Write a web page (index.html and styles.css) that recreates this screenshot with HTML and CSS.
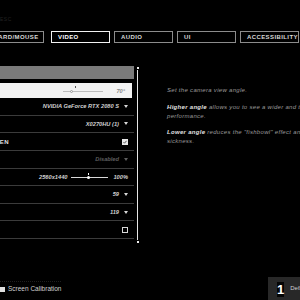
FILE: index.html
```html
<!DOCTYPE html>
<html lang="en">
<head>
    <meta charset="UTF-8">
    <meta name="viewport" content="width=device-width, initial-scale=1.0">
    <title>Settings - Video</title>
    <link rel="stylesheet" href="styles.css">
</head>
<body>

    <div class="screen">
        <!-- top hint -->
        <div class="top-hint">ESC</div>

        <!-- tabs -->
        <nav class="tabs">
            <div class="tab tab-keyboard">KEYBOARD/MOUSE</div>
            <div class="tab active">VIDEO</div>
            <div class="tab">AUDIO</div>
            <div class="tab">UI</div>
            <div class="tab">ACCESSIBILITY</div>
        </nav>

        <div class="content">
            <!-- settings list -->
            <div class="settings">
                <div class="list">
                    <div class="section-bar"></div>

                    <div class="row selected">
                        <div class="slider slider-dim">
                            <span class="track"></span>
                            <span class="marker" style="left: 12px"></span>
                            <span class="knob knob-hollow" style="left: 7px"></span>
                        </div>
                        <span class="value value-dim">70°</span>
                    </div>

                    <div class="row">
                        <span class="value">NVIDIA GeForce RTX 2080 S</span>
                        <span class="arrow"></span>
                    </div>

                    <div class="row">
                        <span class="value">X0270HU (1)</span>
                        <span class="arrow"></span>
                    </div>

                    <div class="row">
                        <div class="label"><span>FULLSCREEN</span></div>
                        <span class="checkbox checked">
                            <svg width="4" height="4" viewBox="0 0 4 4"><path d="M0.5 2.2 L1.5 3.2 L3.5 0.8" fill="none" stroke="#333" stroke-width="0.8"/></svg>
                        </span>
                    </div>

                    <div class="row">
                        <span class="value value-off">Disabled</span>
                        <span class="arrow arrow-off"></span>
                    </div>

                    <div class="row">
                        <span class="value res">2560x1440</span>
                        <div class="slider">
                            <span class="track"></span>
                            <span class="tick" style="left: 17px"></span>
                            <span class="knob" style="left: 16px"></span>
                        </div>
                        <span class="value">100%</span>
                    </div>

                    <div class="row">
                        <span class="value">59</span>
                        <span class="arrow"></span>
                    </div>

                    <div class="row">
                        <span class="value">119</span>
                        <span class="arrow"></span>
                    </div>

                    <div class="row">
                        <span class="checkbox"></span>
                    </div>
                </div>

                <div class="scrollbar">
                    <span class="dot"></span>
                    <span class="line"></span>
                    <span class="dot"></span>
                </div>
            </div>

            <!-- description -->
            <aside class="info">
                <p>Set the camera view angle.</p>
                <p><strong>Higher angle</strong> allows you to see a wider and taller view, but may reduce performance.</p>
                <p><strong>Lower angle</strong> reduces the "fishbowl" effect and can help with reducing motion sickness.</p>
            </aside>
        </div>

        <footer class="footer">
            <div class="calibration">
                <span class="calib-icon"></span>
                Screen Calibration
            </div>
            <div class="defaults">
                <span class="key">1</span>
                <span class="defaults-text">Defaults</span>
            </div>
        </footer>
    </div>

</body>
</html>
```
FILE: styles.css
```css
html, body {
    margin: 0;
    padding: 0;
    background-color: #000;
    overflow: hidden;
}

.screen {
    width: 300px;
    height: 300px;
    display: flex;
    flex-direction: column;
    overflow: hidden;
    font-family: "Liberation Sans", Arial, sans-serif;
    color: #d6d6d6;
}

.top-hint {
    margin-top: 15px;
    height: 8px;
    line-height: 8px;
    font-size: 5px;
    color: #222;
    letter-spacing: 0.5px;
}

/* tabs */
.tabs {
    display: flex;
    gap: 4px;
    margin-top: 8px;
    margin-left: -32px;
}

.tab {
    flex: 0 0 59px;
    box-sizing: border-box;
    height: 12px;
    line-height: 10px;
    padding-left: 6px;
    border: 1px solid #8c8c8c;
    font-size: 6px;
    font-weight: bold;
    letter-spacing: 0.4px;
    color: #d8d8d8;
    white-space: nowrap;
    overflow: hidden;
}

.tab-keyboard {
    flex-basis: 76px;
    margin-right: 3px;
}

.tab.active {
    border-color: #f2f2f2;
    color: #fff;
}

/* main area */
.content {
    display: flex;
    margin-top: 23px;
}

.settings {
    display: flex;
    gap: 2px;
    width: 140px;
    flex-shrink: 0;
}

.list {
    width: 134px;
}

.section-bar {
    height: 13px;
    margin-bottom: 4px;
    background-color: #7a7a7a;
}

.row {
    display: flex;
    align-items: center;
    justify-content: flex-end;
    gap: 3px;
    box-sizing: border-box;
    height: 17.625px;
    padding-right: 6px;
    border-bottom: 1px solid #3b3b3b;
    font-size: 5.7px;
    font-style: italic;
    font-weight: bold;
    white-space: nowrap;
}

.row.selected {
    height: 15px;
    margin-right: 2px;
    padding-right: 7px;
    border-bottom: none;
    background-color: #f3f3f3;
}

.label {
    display: flex;
    justify-content: flex-end;
    width: 9px;
    margin-right: auto;
    font-size: 6px;
    font-style: normal;
    font-weight: bold;
    letter-spacing: 0.4px;
    color: #e0e0e0;
}

.value {
    color: #d2d2d2;
}

.value-dim {
    color: #8a8a8a;
    margin-left: 8px;
}

.value-off {
    color: #5e5e5e;
}

.res {
    margin-right: 1px;
}

.arrow {
    width: 0;
    height: 0;
    margin-left: 2px;
    border-left: 2px solid transparent;
    border-right: 2px solid transparent;
    border-top: 3px solid #d8d8d8;
}

.arrow-off {
    border-top-color: #5e5e5e;
}

.checkbox {
    display: flex;
    align-items: center;
    justify-content: center;
    box-sizing: border-box;
    width: 6px;
    height: 6px;
    border: 1px solid #d8d8d8;
}

.checkbox.checked {
    background-color: #e8e8e8;
    border-color: #e8e8e8;
}

/* sliders */
.slider {
    position: relative;
    width: 37px;
    height: 10px;
    margin-right: 2px;
}

.slider-dim {
    width: 40px;
}

.track {
    position: absolute;
    left: 0;
    right: 0;
    top: 5px;
    height: 1px;
    background-color: #d8d8d8;
}

.slider-dim .track {
    background-color: #bdbdbd;
}

.knob {
    position: absolute;
    top: 4px;
    width: 3px;
    height: 3px;
    border-radius: 50%;
    background-color: #fff;
}

.knob-hollow {
    background-color: #f3f3f3;
    box-sizing: border-box;
    border: 1px solid #9a9a9a;
}

.tick {
    position: absolute;
    top: 1px;
    width: 1px;
    height: 2px;
    background-color: #fff;
}

.marker {
    position: absolute;
    top: 0;
    width: 1px;
    height: 2px;
    background-color: #555;
}

/* scrollbar */
.scrollbar {
    display: flex;
    flex-direction: column;
    align-items: center;
    width: 3px;
    margin-bottom: -5px;
}

.scrollbar .dot {
    width: 2px;
    height: 2px;
    margin: 1px 0;
    background-color: #eee;
}

.scrollbar .line {
    flex: 1;
    width: 1px;
    background-color: #e6e6e6;
}

/* description */
.info {
    margin-left: 27px;
    padding-top: 20px;
    width: 232px;
    flex-shrink: 0;
    font-size: 6px;
    font-style: italic;
    line-height: 9px;
    letter-spacing: 0.3px;
    color: #9a9a9a;
}

.info p {
    margin: 0 0 7.5px;
}

.info strong {
    color: #e0e0e0;
}

/* footer */
.footer {
    display: flex;
    justify-content: space-between;
    align-items: flex-end;
    margin-top: auto;
}

.calibration {
    display: flex;
    align-items: center;
    gap: 3px;
    margin-bottom: 7px;
    padding-top: 3px;
    border-top: 1px dotted #1e1e1e;
    font-size: 6.5px;
    line-height: 8px;
    color: #d0d0d0;
}

.calib-icon {
    width: 5px;
    height: 5px;
    background-color: #e0e0e0;
}

.defaults {
    display: flex;
    align-items: flex-start;
    gap: 6px;
    width: 40px;
    height: 23px;
    margin-right: -8px;
    padding: 5px 0 0 9px;
    box-sizing: border-box;
    background-color: #282828;
    flex-shrink: 0;
}

.key {
    width: 10px;
    height: 15px;
    line-height: 15px;
    text-align: center;
    background-color: #050505;
    color: #fff;
    font-size: 13px;
    font-weight: bold;
}

.defaults-text {
    margin-top: 3px;
    font-size: 6px;
    color: #cfcfcf;
    white-space: nowrap;
}
```
